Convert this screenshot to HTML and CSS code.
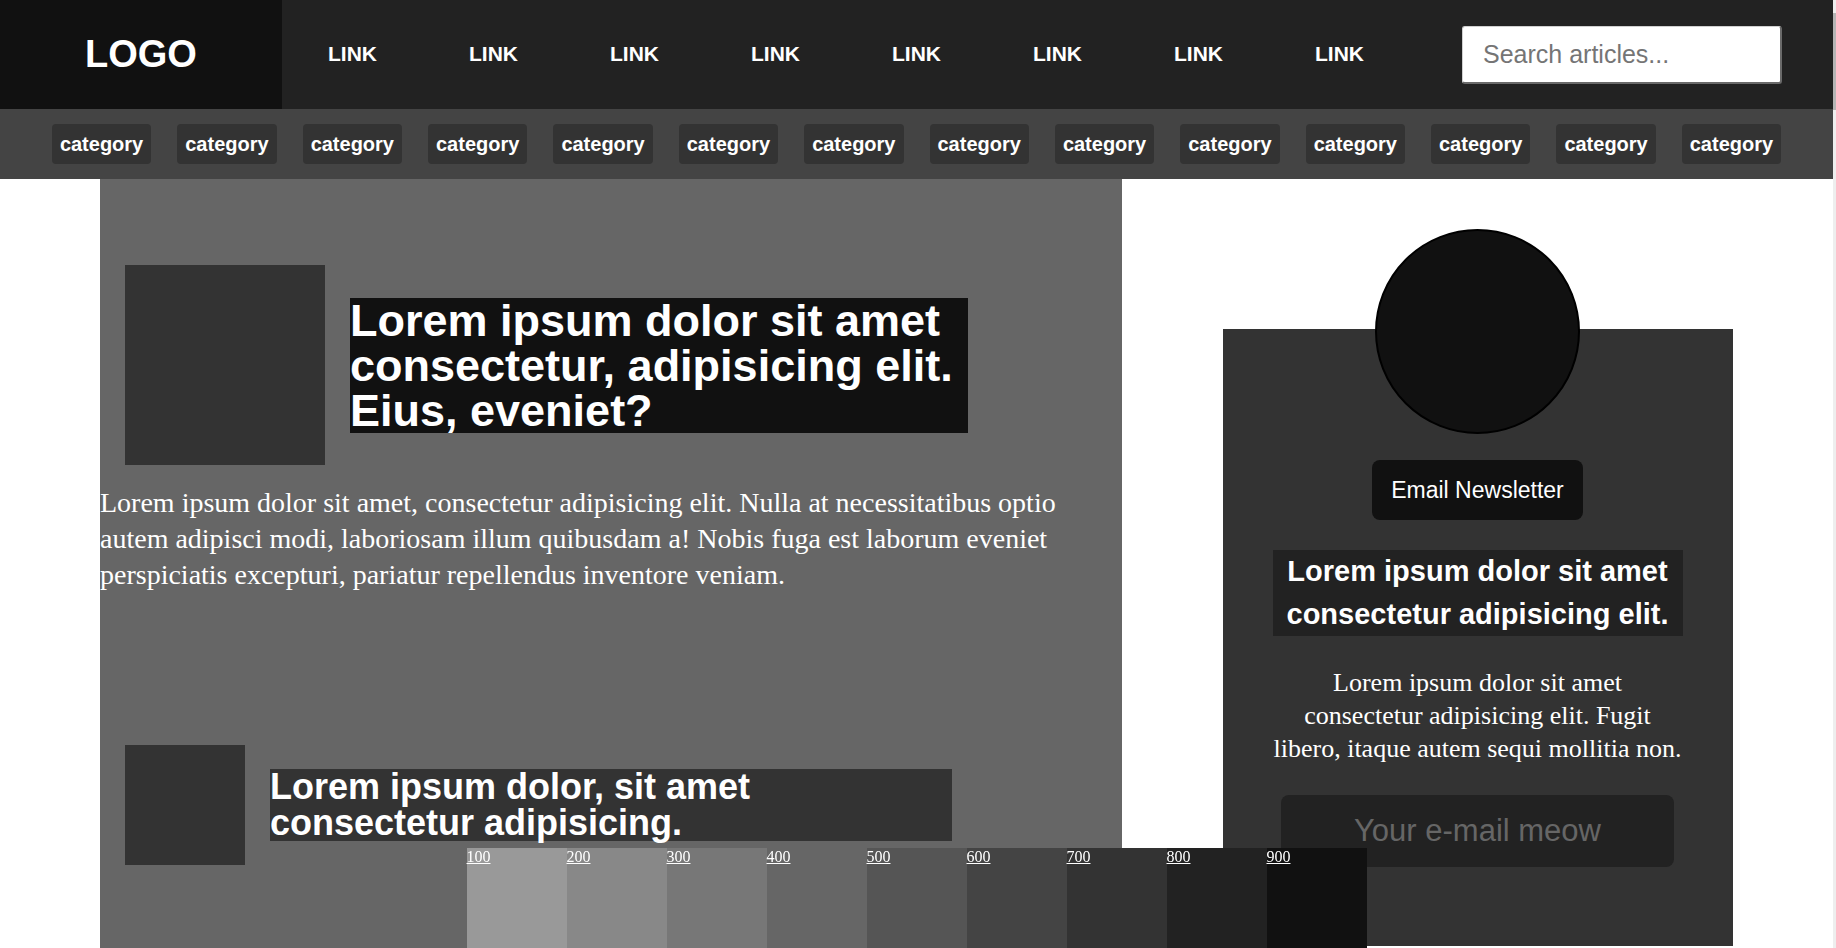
FILE: index.html
```html
<!DOCTYPE html>
<html lang="en">
<head>
<meta charset="utf-8">
<title>Blog</title>
<link rel="stylesheet" href="styles.css">
</head>
<body>
<header class="topbar">
  <div class="logo">LOGO</div>
  <nav class="nav">
    <a class="nav-link" href="#">LINK</a>
    <a class="nav-link" href="#">LINK</a>
    <a class="nav-link" href="#">LINK</a>
    <a class="nav-link" href="#">LINK</a>
    <a class="nav-link" href="#">LINK</a>
    <a class="nav-link" href="#">LINK</a>
    <a class="nav-link" href="#">LINK</a>
    <a class="nav-link" href="#">LINK</a>
  </nav>
  <input class="search" type="text" placeholder="Search articles...">
</header>
<div class="categories">
  <a class="category" href="#">category</a>
  <a class="category" href="#">category</a>
  <a class="category" href="#">category</a>
  <a class="category" href="#">category</a>
  <a class="category" href="#">category</a>
  <a class="category" href="#">category</a>
  <a class="category" href="#">category</a>
  <a class="category" href="#">category</a>
  <a class="category" href="#">category</a>
  <a class="category" href="#">category</a>
  <a class="category" href="#">category</a>
  <a class="category" href="#">category</a>
  <a class="category" href="#">category</a>
  <a class="category" href="#">category</a>
</div>
<main class="layout">
  <section class="feed">
    <article class="feature">
      <div class="feature-row">
        <div class="thumb thumb-lg"></div>
        <h1 class="feature-title">Lorem ipsum dolor sit amet consectetur, adipisicing elit. Eius, eveniet?</h1>
      </div>
      <p class="feature-text">Lorem ipsum dolor sit amet, consectetur adipisicing elit. Nulla at necessitatibus optio autem adipisci modi, laboriosam illum quibusdam a! Nobis fuga est laborum eveniet perspiciatis excepturi, pariatur repellendus inventore veniam.</p>
    </article>
    <article class="post">
      <div class="thumb thumb-sm"></div>
      <h2 class="post-title">Lorem ipsum dolor, sit amet consectetur adipisicing.</h2>
    </article>
  </section>
  <aside class="sidebar">
    <div class="newsletter">
      <div class="avatar"></div>
      <button class="newsletter-btn" type="button">Email Newsletter</button>
      <h3 class="newsletter-title">Lorem ipsum dolor sit amet consectetur adipisicing elit.</h3>
      <p class="newsletter-text">Lorem ipsum dolor sit amet consectetur adipisicing elit. Fugit libero, itaque autem sequi mollitia non.</p>
      <input class="newsletter-input" type="email" placeholder="Your e-mail meow">
    </div>
  </aside>
</main>
<div class="palette">
  <div class="swatch s100"><a href="#">100</a></div>
  <div class="swatch s200"><a href="#">200</a></div>
  <div class="swatch s300"><a href="#">300</a></div>
  <div class="swatch s400"><a href="#">400</a></div>
  <div class="swatch s500"><a href="#">500</a></div>
  <div class="swatch s600"><a href="#">600</a></div>
  <div class="swatch s700"><a href="#">700</a></div>
  <div class="swatch s800"><a href="#">800</a></div>
  <div class="swatch s900"><a href="#">900</a></div>
</div>
<div class="scroll-thumb"></div>
</body>
</html>
```

FILE: styles.css
```css
* { box-sizing: border-box; }

html { background: #eeeeee; }

body {
  margin: 0 3px 0 0;
  font-family: "Liberation Sans", Arial, sans-serif;
  background: #fff;
}

/* thin scrollbar look at the right edge */
.scroll-thumb {
  position: fixed;
  top: 13px;
  right: 0;
  width: 3px;
  height: 97px;
  background: #b5b5b5;
}

.topbar {
  display: flex;
  align-items: center;
  height: 109px;
  background: #222;
}

.logo {
  flex: 0 0 282px;
  height: 100%;
  display: flex;
  align-items: center;
  justify-content: center;
  background: #111;
  color: #fff;
  font-weight: bold;
  font-size: 38px;
}

.nav {
  display: flex;
  padding-bottom: 2px;
}

.nav-link {
  width: 141px;
  padding-left: 46px;
  color: #fff;
  font-weight: bold;
  font-size: 21px;
  text-decoration: none;
}

.search {
  margin-left: auto;
  margin-right: 51px;
  width: 320px;
  height: 58px;
  padding: 0 20px;
  font-family: "Liberation Sans", Arial, sans-serif;
  font-size: 25px;
  background: #fff;
  border: 0;
  border-top: 1px solid #d0d0d0;
  border-left: 1px solid #d0d0d0;
  border-right: 2px solid #6a6a6a;
  border-bottom: 2px solid #6a6a6a;
  border-radius: 3px;
  outline: none;
}
.search::placeholder { color: #757575; }

.categories {
  display: flex;
  align-items: center;
  justify-content: center;
  gap: 26px;
  height: 70px;
  background: #444;
}

.category {
  padding: 8px;
  line-height: 24px;
  background: #333;
  border-radius: 4px;
  color: #fff;
  font-weight: bold;
  font-size: 20px;
  text-decoration: none;
}

.layout {
  display: flex;
  padding-left: 100px;
}

.feed {
  flex: 0 0 1022px;
  background: #666;
  padding: 86px 0 220px;
}

.feature-row,
.post {
  display: flex;
  align-items: center;
  gap: 25px;
  padding-left: 25px;
}

.thumb { flex: none; background: #333; }
.thumb-lg { width: 200px; height: 200px; }
.thumb-sm { width: 120px; height: 120px; }

.feature-title {
  margin: 0;
  width: 618px;
  background: #111;
  color: #fff;
  font-size: 45px;
  line-height: 45px;
}

.feature-text {
  margin: 20px 0 0;
  font-family: "Liberation Serif", "Times New Roman", serif;
  font-size: 28px;
  line-height: 36px;
  color: #fff;
}

.post { margin-top: 152px; }

.post-title {
  margin: 0;
  width: 682px;
  background: #333;
  color: #fff;
  font-size: 36px;
  line-height: 36px;
}

.sidebar {
  flex: 1;
  display: flex;
  justify-content: center;
  align-items: flex-start;
  padding-top: 150px;
}

.newsletter {
  width: 510px;
  padding: 0 50px 79px;
  background: #333;
  display: flex;
  flex-direction: column;
  align-items: center;
}

.avatar {
  width: 205px;
  height: 205px;
  margin-top: -100px;
  border-radius: 50%;
  background: #111;
  border: 2px solid #000;
}

.newsletter-btn {
  margin-top: 26px;
  height: 60px;
  padding: 0 19px;
  background: #111;
  color: #fff;
  border: 0;
  border-radius: 8px;
  font-family: "Liberation Sans", Arial, sans-serif;
  font-size: 23px;
}

.newsletter-title {
  margin: 30px 0 0;
  width: 100%;
  background: #222;
  color: #fff;
  font-size: 29px;
  line-height: 43px;
  text-align: center;
}

.newsletter-text {
  margin: 30px 0 0;
  font-family: "Liberation Serif", "Times New Roman", serif;
  font-size: 26px;
  line-height: 33px;
  color: #fff;
  text-align: center;
}

.newsletter-input {
  margin-top: 30px;
  width: 393px;
  height: 72px;
  border: 0;
  border-radius: 8px;
  background: #222;
  color: #fff;
  font-family: "Liberation Sans", Arial, sans-serif;
  font-size: 31px;
  text-align: center;
  outline: none;
}
.newsletter-input::placeholder { color: #666; }

.palette {
  position: fixed;
  bottom: 0;
  left: 0;
  right: 3px;
  display: flex;
  justify-content: center;
}

.swatch { width: 100px; height: 100px; }
.swatch a {
  color: #fff;
  font-family: "Liberation Serif", "Times New Roman", serif;
  font-size: 16px;
}
.s100 { background: #999; }
.s200 { background: #888; }
.s300 { background: #777; }
.s400 { background: #666; }
.s500 { background: #555; }
.s600 { background: #444; }
.s700 { background: #333; }
.s800 { background: #222; }
.s900 { background: #111; }
```
